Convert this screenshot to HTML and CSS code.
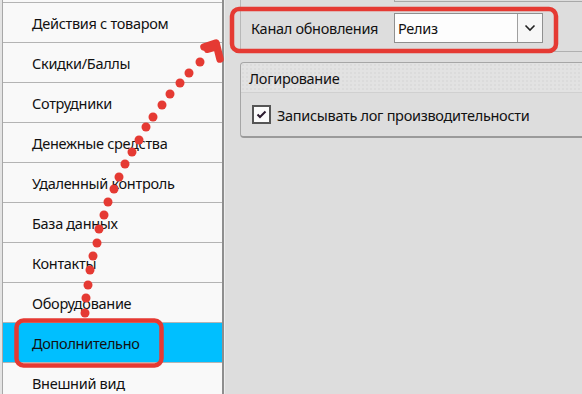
FILE: index.html
```html
<!DOCTYPE html>
<html lang="ru">
  <head>
    <meta charset="UTF-8" />
    <title>Настройки</title>
    <link rel="stylesheet" href="styles.css">
  </head>
  <body>
    <div class="window">
      <!-- Left menu -->
      <aside class="sidebar">
        <div class="menu-top"></div>
        <div class="menu-item">Действия с товаром</div>
        <div class="menu-item">Скидки/Баллы</div>
        <div class="menu-item">Сотрудники</div>
        <div class="menu-item">Денежные средства</div>
        <div class="menu-item">Удаленный контроль</div>
        <div class="menu-item">База данных</div>
        <div class="menu-item">Контакты</div>
        <div class="menu-item">Оборудование</div>
        <div class="menu-item active">Дополнительно</div>
        <div class="menu-item">Внешний вид</div>
      </aside>

      <!-- Settings -->
      <section class="settings">
        <div class="channel-panel">
          <div class="prev-field"></div>
          <div class="channel-row">
            <span class="field-label">Канал обновления</span>
            <div class="select">
              <span class="select-value">Релиз</span>
              <span class="select-btn">
                <svg width="12" height="8" viewBox="0 0 12 8"><path d="M1.5 1.5 L6 6 L10.5 1.5" fill="none" stroke="#222" stroke-width="1.6"/></svg>
              </span>
            </div>
          </div>
        </div>

        <div class="group">
          <div class="group-header">Логирование</div>
          <div class="group-body">
            <label class="check">
              <span class="check-box">
                <svg width="11" height="9" viewBox="0 0 11 9"><path d="M1.5 4.5 L4 7 L9.5 1.5" fill="none" stroke="#2a1a2e" stroke-width="2"/></svg>
              </span>
              Записывать лог производительности
            </label>
          </div>
        </div>
      </section>
    </div>

    <!-- Red annotation overlay -->
    <svg class="annotations" width="582" height="394" viewBox="0 0 582 394">
      <g fill="none" stroke="#e53a33" stroke-width="4.5">
        <rect x="232" y="9" width="324" height="42" rx="7"/>
        <rect x="16.5" y="320.5" width="145" height="45" rx="7"/>
        <path d="M204 47 L216 43 L220 59" stroke-width="7.5" stroke-linecap="round" stroke-linejoin="round"/>
        <path d="M207 50 L214 48" stroke-width="6" stroke-linecap="round"/>
      </g>
      <g fill="#e53a33">
        <circle cx="85" cy="313" r="4.5"/>
        <circle cx="86" cy="298" r="4.5"/>
        <circle cx="88" cy="285" r="4.5"/>
        <circle cx="90" cy="270" r="4.5"/>
        <circle cx="93" cy="256" r="4.5"/>
        <circle cx="97" cy="243" r="4.5"/>
        <circle cx="99" cy="229" r="4.5"/>
        <circle cx="104" cy="215" r="4.5"/>
        <circle cx="108" cy="202" r="4.5"/>
        <circle cx="114" cy="189" r="4.5"/>
        <circle cx="119" cy="177" r="4.5"/>
        <circle cx="125" cy="164" r="4.5"/>
        <circle cx="132" cy="152" r="4.5"/>
        <circle cx="139" cy="140" r="4.5"/>
        <circle cx="146" cy="127" r="4.5"/>
        <circle cx="153" cy="117" r="4.5"/>
        <circle cx="162" cy="105" r="4.5"/>
        <circle cx="170" cy="94" r="4.5"/>
        <circle cx="180" cy="83" r="4.5"/>
        <circle cx="189" cy="73" r="4.5"/>
        <circle cx="200" cy="62" r="4.5"/>
      </g>
    </svg>
  </body>
</html>
```

FILE: styles.css
```css
body {
  margin: 0;
  padding: 0;
  font-family: "Noto Sans", "Open Sans", sans-serif;
  font-size: 14.5px;
  letter-spacing: -0.3px;
  color: #111;
  background: #dddddd;
  overflow: hidden;
}
.window {
  display: flex;
  height: 394px;
  padding-left: 2px;
  background: #e4e4e4;
}

/* Left menu */
.sidebar {
  width: 219px;
  flex-shrink: 0;
  background: #f9f9f9;
  border-left: 1px solid #a8a8a8;
  border-right: 2px solid #8e8e8e;
}
.menu-top {
  height: 2px;
  border-bottom: 1px solid #b4b4b4;
}
.menu-item {
  height: 39px;
  display: flex;
  align-items: center;
  padding-left: 29px;
  border-bottom: 1px solid #b4b4b4;
  white-space: nowrap;
}
.menu-item.active {
  background: #00bfff;
}

/* Settings area */
.settings {
  flex: 1;
  background: #dddddd;
  padding-left: 15px;
  border-left: 1px solid #ececec;
}
.channel-panel {
  height: 51px;
  border-left: 1px solid #b8b8b8;
  border-bottom: 1px solid #b0b0b0;
}
.prev-field {
  height: 1px;
  margin-left: 153px;
  border-left: 1px solid #a8a8a8;
  border-bottom: 1px solid #a8a8a8;
}
.channel-row {
  display: flex;
  align-items: center;
  margin-top: 11px;
  padding-left: 10px;
}
.field-label {
  width: 143px;
}
.select {
  display: flex;
  width: 147px;
  height: 28px;
  border: 1px solid #8f8f8f;
  background: #fdfdfd;
}
.select-value {
  flex: 1;
  display: flex;
  align-items: center;
  padding-left: 3px;
}
.select-btn {
  width: 24px;
  display: flex;
  align-items: center;
  justify-content: center;
  border-left: 1px solid #a0a0a0;
  background: #f7f7f7;
}

/* Group box */
.group {
  margin-top: 10px;
  margin-right: -6px;
  border: 1px solid #a6a6a6;
  border-bottom: 2px solid #9a9a9a;
  border-radius: 4px;
}
.group-header {
  height: 29px;
  display: flex;
  align-items: center;
  padding-left: 8px;
  background-color: #e2e2e2;
  background-image: radial-gradient(#d3d3d3 0.6px, transparent 0.8px);
  background-size: 4px 4px;
  border-bottom: 1px solid #d0d0d0;
  border-radius: 4px 4px 0 0;
}
.group-body {
  height: 43px;
  display: flex;
  align-items: center;
  padding-left: 11px;
}
.check {
  display: flex;
  align-items: center;
  gap: 6px;
}
.check-box {
  width: 15px;
  height: 15px;
  display: flex;
  align-items: center;
  justify-content: center;
  border: 2px solid #555;
  background: #fbfbfb;
}

.annotations {
  position: absolute;
  left: 0;
  top: 0;
  pointer-events: none;
}
```
